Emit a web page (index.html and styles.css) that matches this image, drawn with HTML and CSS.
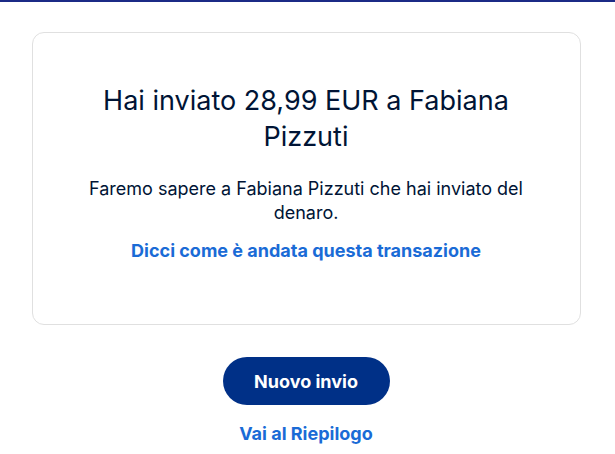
FILE: index.html
```html
<!DOCTYPE html>
<html lang="it">
<head>
<meta charset="utf-8">
<link rel="stylesheet" href="styles.css">
</head>
<body>
<div class="topbar"></div>
<main class="page">
  <section class="card">
    <h1 class="title">Hai inviato 28,99 EUR a Fabiana Pizzuti</h1>
    <p class="text">Faremo sapere a Fabiana Pizzuti che hai inviato del denaro.</p>
    <a class="link" href="#">Dicci come è andata questa transazione</a>
  </section>
  <div class="actions">
    <button class="btn">Nuovo invio</button>
    <a class="link" href="#">Vai al Riepilogo</a>
  </div>
</main>
</body>
</html>
```
FILE: styles.css
```css
* { box-sizing: border-box; }
html, body { margin: 0; padding: 0; background: #fff; }
body { font-family: "Inter", "Liberation Sans", Arial, sans-serif; color: #001435; }
.topbar { height: 2px; background: #1b2a86; }
.page { display: flex; flex-direction: column; align-items: center; padding: 30px 3px 0 0; }
.card {
  width: 549px;
  border: 1px solid #e0e0e0;
  border-radius: 12px;
  padding: 50px 48px 61px;
  display: flex; flex-direction: column; align-items: center;
  text-align: center;
}
.title { margin: 0; font-size: 27px; font-weight: 400; line-height: 36px; }
.text { margin: 22px 0 14px; font-size: 18px; line-height: 24px; }
.link { color: #1a6bd6; font-weight: 700; font-size: 18px; line-height: 24px; text-decoration: none; }
.actions { display: flex; flex-direction: column; align-items: center; margin-top: 32px; gap: 17px; }
.btn {
  width: 167px; height: 48px; border: 0; border-radius: 24px;
  background: #003087; color: #fff; font-family: inherit;
  font-size: 18px; font-weight: 700;
}
```
